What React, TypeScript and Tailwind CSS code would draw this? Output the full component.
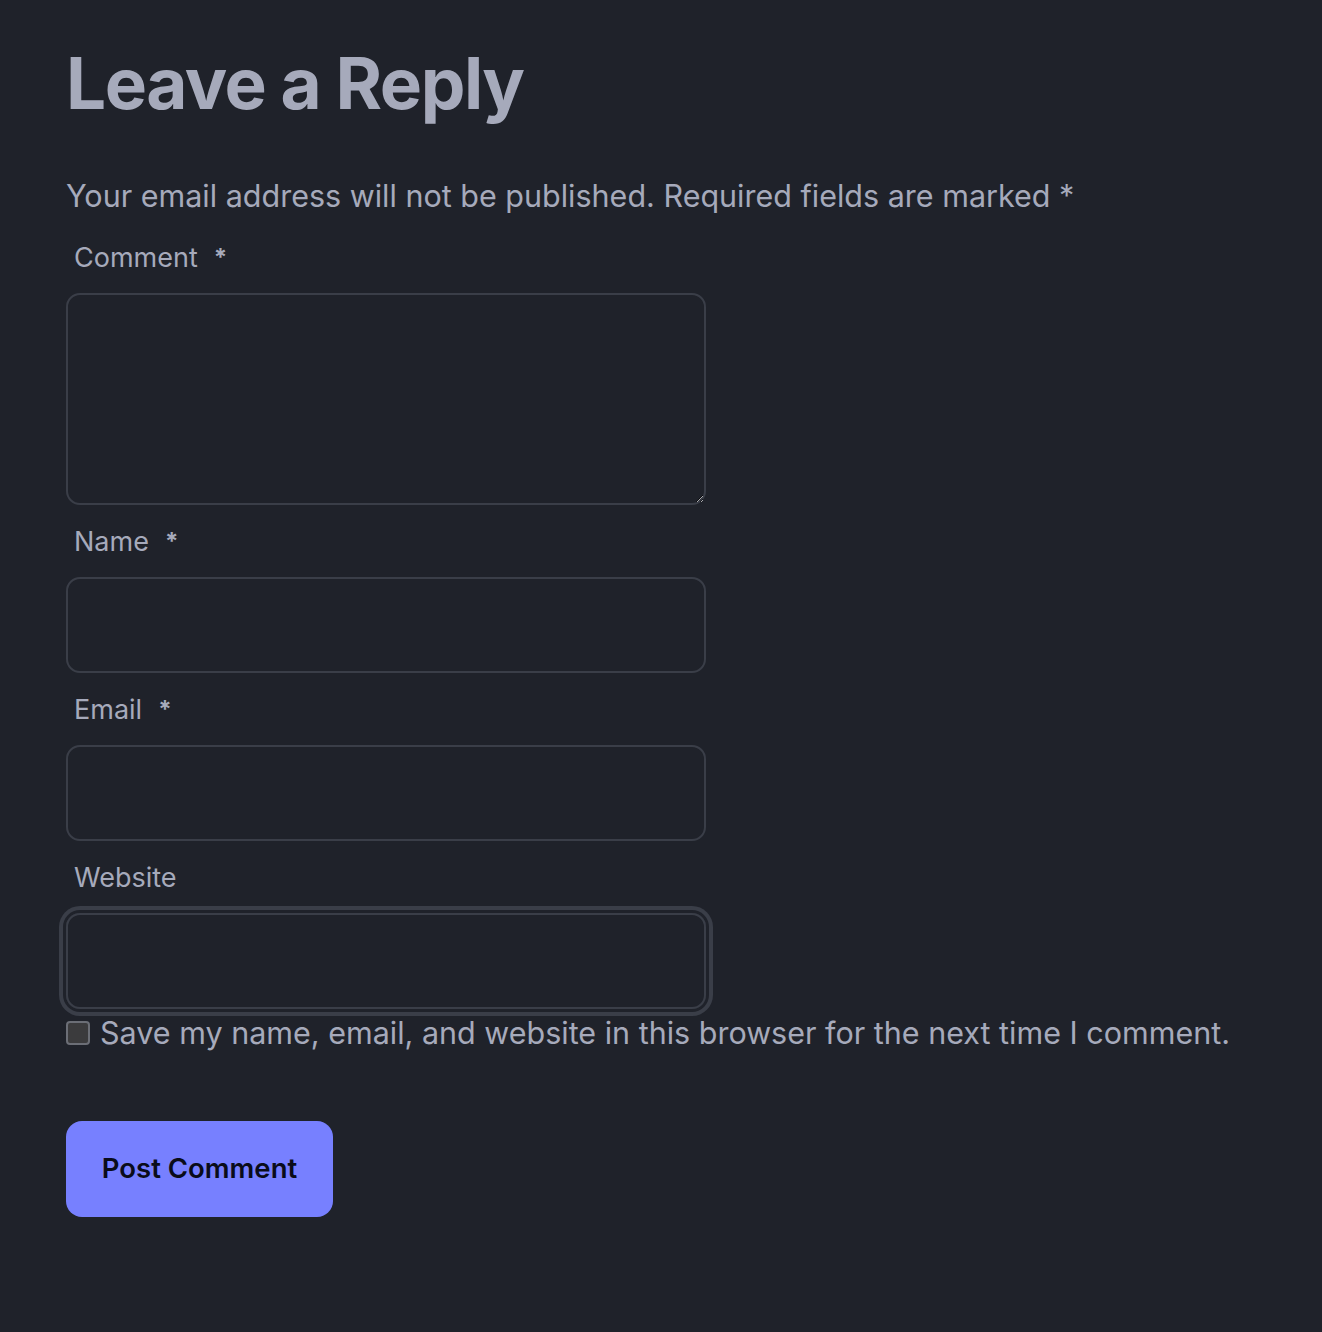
import React from "react";

const Field = ({
  label,
  required,
  children,
}: {
  label: string;
  required?: boolean;
  children: React.ReactNode;
}) => (
  <div className="flex flex-col">
    <label className="flex items-center px-2 text-[27px] leading-[40px] text-[#a6aabb]">
      {label}
      {required && <span className="ml-[16px] text-[24px] font-bold">*</span>}
    </label>
    {children}
  </div>
);

const inputCls =
  "mt-[15px] h-[96px] w-[640px] rounded-[14px] border-2 border-[#3a3e48] bg-transparent px-4 outline-none";

export default function App() {
  return (
    <div className="min-h-[1332px] w-full bg-[#1f222a] px-[66px] pt-[38px] font-['Inter',sans-serif] text-[#a6aabb]">
      <h1 className="text-[71px] font-bold leading-[90px] tracking-[-1.5px] text-[#a6aabb]">
        Leave a Reply
      </h1>
      <p className="mt-[44px] text-[30.5px] leading-[48px]">
        Your email address will not be published. Required fields are marked *
      </p>
      <form className="mt-[18px] flex flex-col gap-[17px]">
        <Field label="Comment" required>
          <textarea className="mt-[15px] h-[212px] w-[640px] resize-y rounded-[14px] border-2 border-[#3a3e48] bg-transparent p-3 outline-none" />
        </Field>
        <Field label="Name" required>
          <input className={inputCls} />
        </Field>
        <Field label="Email" required>
          <input className={inputCls} />
        </Field>
        <Field label="Website">
          <input className={`${inputCls} ring-[4px] ring-[#3a3e48] ring-offset-[3px] ring-offset-[#1f222a]`} />
        </Field>
      </form>
      <label className="mt-[4px] flex items-center gap-[10px] text-[30.5px] leading-[40px]">
        <span className="h-[24px] w-[24px] rounded-[4px] border-2 border-[#6b6e76] bg-[#3b3b3d]" />
        Save my name, email, and website in this browser for the next time I comment.
      </label>
      <button className="mt-[68px] h-[96px] w-[267px] rounded-[16px] bg-[#7780ff] text-[27.5px] font-semibold text-[#0a0c1a]">
        Post Comment
      </button>
    </div>
  );
}
